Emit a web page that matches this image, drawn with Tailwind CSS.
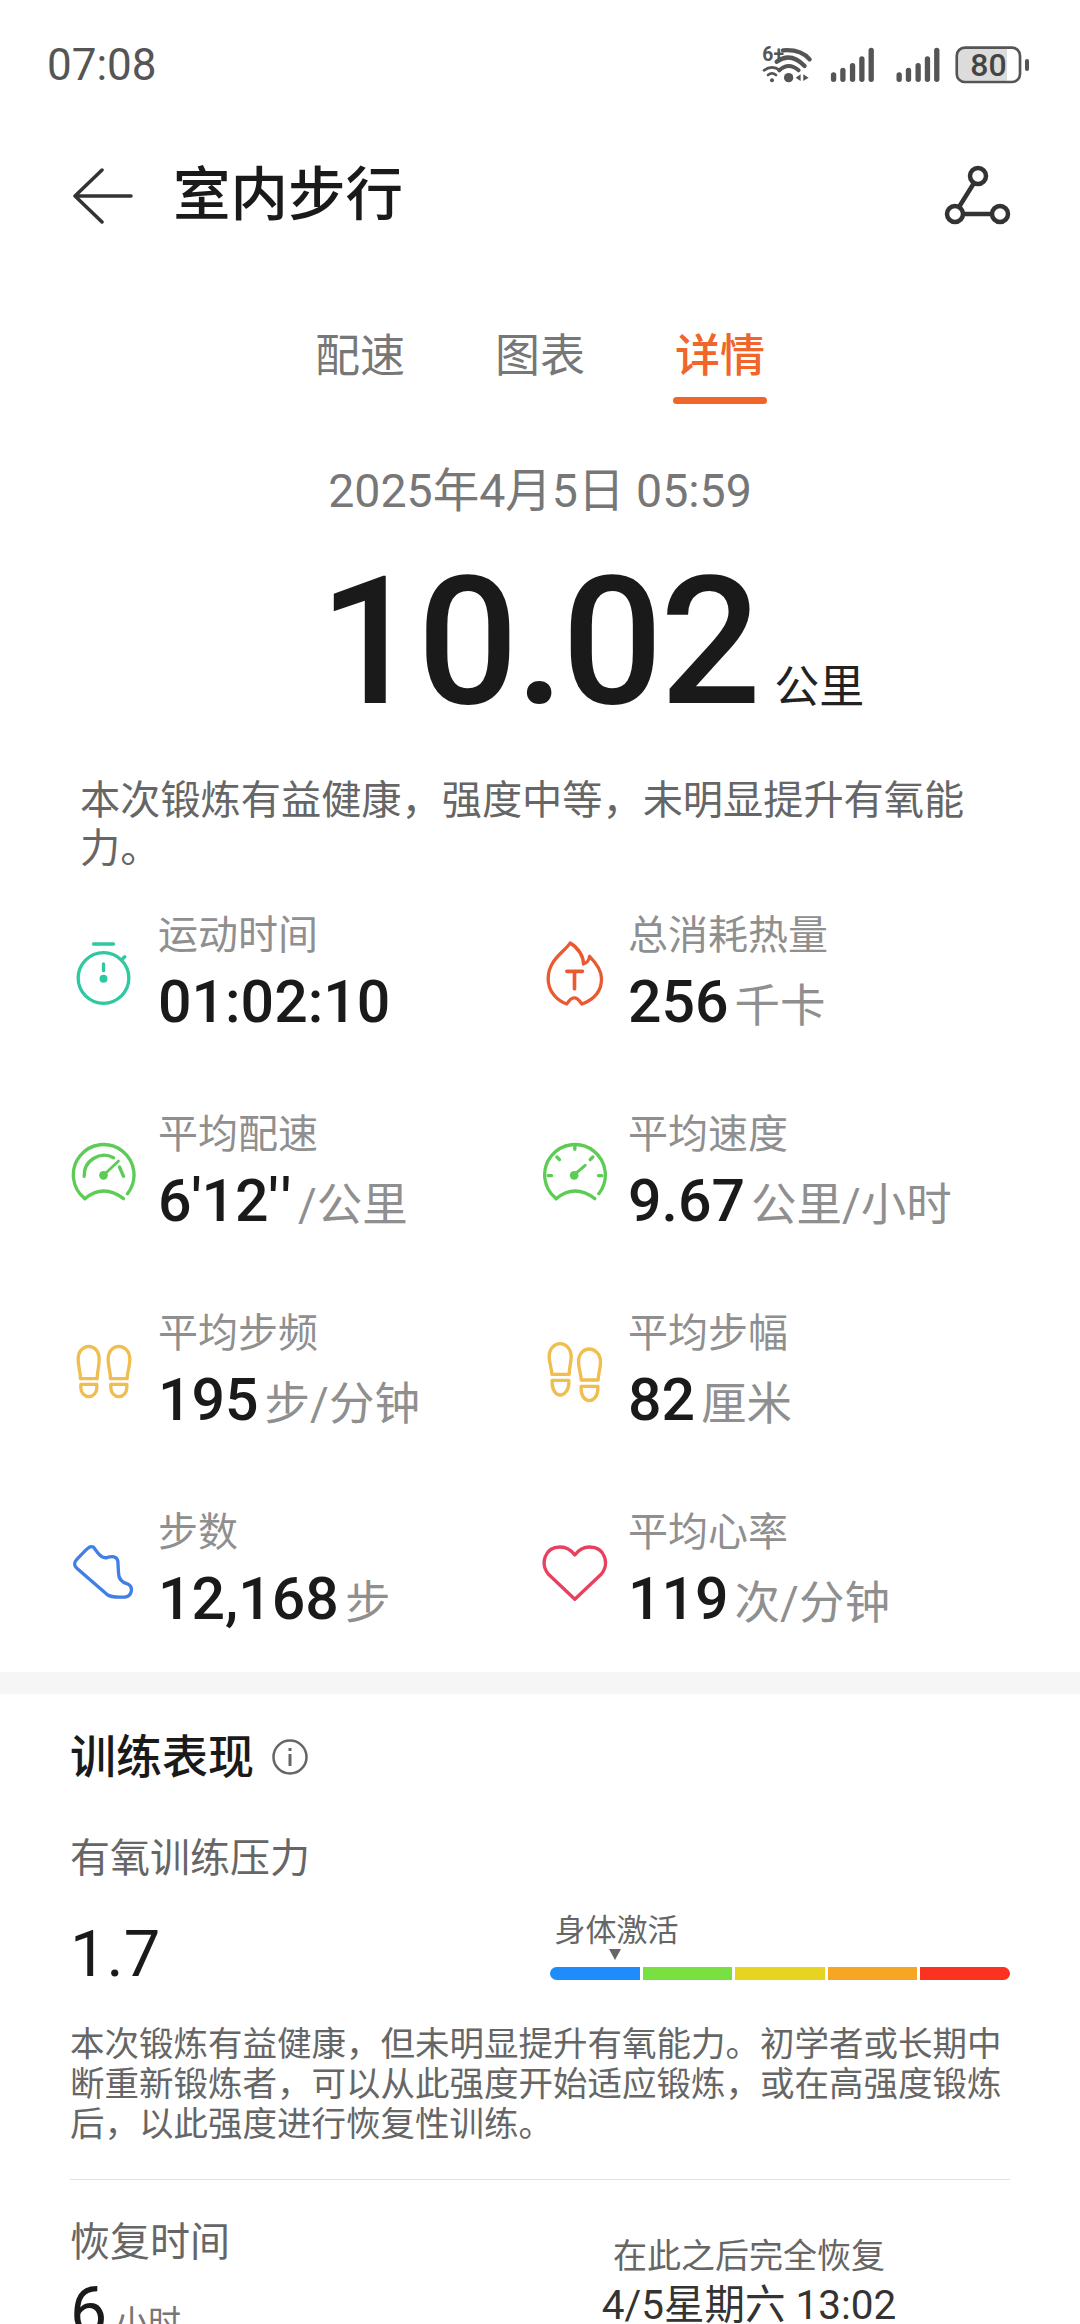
<!DOCTYPE html>
<html lang="zh-CN">
<head>
  <meta charset="UTF-8" />
  <meta name="viewport" content="width=device-width, initial-scale=1.0"/>
  <title>室内步行</title>
  <script src="https://cdn.jsdelivr.net/npm/@tailwindcss/browser@4"></script>
</head>

<body class="bg-white text-[#1a1a1a] font-['Roboto','Noto_Sans_CJK_SC',sans-serif]">
<div class="w-[1080px] h-[2324px] overflow-hidden">

  <!-- Status bar -->
  <div class="h-[130px] mb-[3px] pl-[47px] pr-[50px] flex items-center justify-between">
    <span class="text-[44px] leading-[50px] text-[#555]">07:08</span>
    <svg class="w-[273px] h-[70px] shrink-0 mr-[-1px] mb-[18px]" viewBox="170 0 820 210" fill="none">
      <!-- wifi -->
      <text x="183" y="120" font-size="58" font-weight="700" fill="#555" font-family="Roboto">6+</text>
      <g stroke="#555" stroke-linecap="round">
        <path d="M245 88Q298 84 325 115" stroke-width="13"/>
        <path d="M226 122Q268 92 310 135" stroke-width="13"/>
        <path d="M234 148Q262 122 292 148" stroke-width="12"/>
        <path d="M188 148Q212 130 236 148" stroke-width="8"/>
        <path d="M200 162Q212 152 224 162" stroke-width="8"/>
      </g>
      <circle cx="212" cy="178" r="6" fill="#555"/>
      <circle cx="262" cy="170" r="14" fill="#555"/>
      <path d="M283 170L298 160V180ZM306 160L322 170L306 180Z" fill="#555"/>
      <!-- signal -->
      <g stroke="#555" stroke-width="16" stroke-linecap="round">
        <path d="M397 175V162M425 175V148M454 175V134M482 175V114M510 175V88"/>
        <path d="M594 175V162M622 175V148M651 175V134M679 175V114M707 175V88"/>
      </g>
      <!-- battery -->
      <path d="M785 84H918V179H785Q771 179 771 165V98Q771 84 785 84Z" fill="#dcdcdc"/>
      <rect x="767" y="80" width="190" height="103" rx="24" stroke="#555" stroke-width="8"/>
      <text x="862" y="165" text-anchor="middle" font-size="96" font-weight="500" fill="#444" font-family="Roboto">80</text>
      <rect x="972" y="114" width="12" height="36" rx="6" fill="#555"/>
    </svg>
  </div>

  <!-- Header -->
  <div class="h-[126px] flex items-center justify-between pl-[72px] pr-[68px]">
    <div class="flex items-center">
      <svg class="w-[62px] h-[56px]" viewBox="0 0 62 56" fill="none" stroke="#333" stroke-width="3.5" stroke-linecap="round" stroke-linejoin="round">
        <path d="M30 2L3 28L30 54M3 28H59"/>
      </svg>
      <h1 class="ml-[39px] text-[57.5px] leading-[70px] font-medium text-[#1a1a1a]">室内步行</h1>
    </div>
    <svg class="w-[70px] h-[64px]" viewBox="0 0 70 64" fill="none" stroke="#333" stroke-width="4.5">
      <circle cx="36" cy="12" r="8"/>
      <circle cx="13" cy="50" r="8"/>
      <circle cx="58" cy="50" r="8"/>
      <path d="M32 19L17 43M21 50H50"/>
    </svg>
  </div>

  <!-- Tabs -->
  <div class="mt-[68px] flex justify-center gap-[90px] text-[45px] leading-[60px] text-[#777]">
    <div>配速</div>
    <div>图表</div>
    <div class="relative text-[#f0652a] font-medium">详情
      <div class="absolute left-[-2px] right-[-2px] top-[70px] h-[7px] rounded-full bg-[#f0652a]"></div>
    </div>
  </div>

  <!-- Summary -->
  <div class="mt-[74px] text-center text-[46.5px] leading-[60px] text-[#777]">2025年4月5日 05:59</div>
  <div class="mt-[31px] pl-[319px] h-[180px] flex items-baseline gap-[16px]">
    <span class="text-[178px] leading-[180px] font-medium tracking-[-3px] text-[#1a1a1a]">10.02</span>
    <span class="text-[45px] text-[#222]">公里</span>
  </div>
  <p class="mt-[45px] ml-[80px] w-[890px] text-[40.2px] leading-[48px] text-[#666]">本次锻炼有益健康，强度中等，未明显提升有氧能力。</p>

  <!-- Stats grid -->
  <div class="mt-[33px] pl-[70px] grid grid-cols-[470px_1fr] grid-rows-[199px_199px_199px_169px]">
    <div class="flex">
      <div class="w-[88px] pt-[32px]">
        <svg class="w-[67px] h-[70px]" viewBox="60 110 200 210" fill="none" stroke="#2fc8a0" stroke-width="10" stroke-linecap="round">
          <path d="M130 128H190"/>
          <circle cx="160" cy="230" r="76"/>
          <path d="M214 176L224 166"/>
          <path d="M160 188V208"/>
          <circle cx="160" cy="232" r="12" fill="#2fc8a0" stroke="none"/>
        </svg>
      </div>
      <div>
        <div class="text-[40px] leading-[60px] text-[#8f8f8f]">运动时间</div>
        <div class="text-[59px] leading-[72px] font-medium">01:02:10</div>
      </div>
    </div>
    <div class="flex">
      <div class="w-[88px] pt-[32px]">
        <svg class="w-[67px] h-[70px] ml-[2px]" viewBox="66 110 200 210" fill="none" stroke="#ea5a32" stroke-width="10" stroke-linecap="round" stroke-linejoin="round">
          <path d="M150 125C135 150 84 175 84 232C84 270 110 298 140 308C148 295 158 288 165 290C172 290 178 298 185 308C220 295 244 270 244 232C244 205 228 185 208 165C208 175 200 185 190 188C190 165 175 140 150 125Z"/>
          <path d="M140 210H187M163 210V262" stroke-width="11"/>
        </svg>
      </div>
      <div>
        <div class="text-[40px] leading-[60px] text-[#8f8f8f]">总消耗热量</div>
        <div class="text-[59px] leading-[72px] font-medium">256<span class="ml-[6px] text-[45.5px] font-normal text-[#8f8f8f]">千卡</span></div>
      </div>
    </div>

    <div class="flex">
      <div class="w-[88px] pt-[32px]">
        <svg class="w-[67px] h-[70px]" viewBox="60 708 200 210" fill="none" stroke="#5ccc55" stroke-width="10" stroke-linecap="round">
          <path d="M104 893A91 91 0 1 1 232 878"/>
          <path d="M104 893Q160 847 220 893"/>
          <path d="M102 826A60 60 0 0 1 190 770"/>
          <path d="M208 798L220 826"/>
          <path d="M160 823L205 780" stroke-width="8"/>
          <circle cx="160" cy="823" r="13" fill="#5ccc55" stroke="none"/>
        </svg>
      </div>
      <div>
        <div class="text-[40px] leading-[60px] text-[#8f8f8f]">平均配速</div>
        <div class="text-[59px] leading-[72px] font-medium">6'12<span class="tracking-[5px]">''</span><span class="ml-[2px] text-[45.5px] font-normal text-[#8f8f8f]">/公里</span></div>
      </div>
    </div>
    <div class="flex">
      <div class="w-[88px] pt-[32px]">
        <svg class="w-[67px] h-[70px] ml-[2px]" viewBox="66 708 200 210" fill="none" stroke="#5ccc55" stroke-width="10" stroke-linecap="round">
          <path d="M108 893A91 91 0 1 1 236 878"/>
          <path d="M108 893Q164 847 224 893"/>
          <path d="M84 824H94M110 768L118 776M164 735V745M218 768L210 776M245 824H235"/>
          <path d="M160 823L195 793" stroke-width="9"/>
          <circle cx="162" cy="823" r="13" fill="#5ccc55" stroke="none"/>
        </svg>
      </div>
      <div>
        <div class="text-[40px] leading-[60px] text-[#8f8f8f]">平均速度</div>
        <div class="text-[59px] leading-[72px] font-medium">9.67<span class="ml-[6px] text-[45.5px] font-normal text-[#8f8f8f]">公里/小时</span></div>
      </div>
    </div>

    <div class="flex">
      <div class="w-[88px] pt-[32px]">
        <svg class="w-[67px] h-[70px]" viewBox="60 135 200 210" fill="none" stroke="#f0bd4f" stroke-width="10" stroke-linejoin="round">
          <path d="M84 205C84 180 100 166 116 166C132 166 147 180 147 205C147 225 141 245 141 263H91C91 245 84 225 84 205Z"/>
          <path d="M92 280H140V290C140 305 128 317 116 317C104 317 92 305 92 290Z"/>
          <path d="M174 205C174 180 190 166 206 166C222 166 239 180 239 205C239 225 231 245 231 263H181C181 245 174 225 174 205Z"/>
          <path d="M182 280H230V290C230 305 218 317 206 317C194 317 182 305 182 290Z"/>
        </svg>
      </div>
      <div>
        <div class="text-[40px] leading-[60px] text-[#8f8f8f]">平均步频</div>
        <div class="text-[59px] leading-[72px] font-medium">195<span class="ml-[6px] text-[45.5px] font-normal text-[#8f8f8f]">步/分钟</span></div>
      </div>
    </div>
    <div class="flex">
      <div class="w-[88px] pt-[32px]">
        <svg class="w-[67px] h-[70px] ml-[2px]" viewBox="66 135 200 210" fill="none" stroke="#f0bd4f" stroke-width="10" stroke-linejoin="round">
          <path d="M87 197C87 172 103 158 120 158C136 158 153 172 153 197C153 215 147 232 147 250H95C95 232 87 215 87 197Z"/>
          <path d="M96 268H146V276C146 298 132 312 120 312C108 312 96 298 96 276Z"/>
          <path d="M175 213C175 188 191 174 207 174C223 174 241 188 241 213C241 231 234 250 234 267H183C183 250 175 231 175 213Z"/>
          <path d="M183 286H233V294C233 316 219 329 207 329C195 329 183 316 183 294Z"/>
        </svg>
      </div>
      <div>
        <div class="text-[40px] leading-[60px] text-[#8f8f8f]">平均步幅</div>
        <div class="text-[59px] leading-[72px] font-medium">82<span class="ml-[6px] text-[45.5px] font-normal text-[#8f8f8f]">厘米</span></div>
      </div>
    </div>

    <div class="flex">
      <div class="w-[88px] pt-[32px]">
        <svg class="w-[67px] h-[70px]" viewBox="60 732 200 210" fill="none" stroke="#3f7fe6" stroke-width="10" stroke-linejoin="round">
          <path d="M125 767C115 765 100 785 80 805C70 815 72 825 80 832L170 910C180 918 195 920 225 918C245 915 250 890 235 880C215 875 205 865 205 845L203 810C200 795 185 795 170 800C155 803 145 790 135 775C132 770 128 767 125 767Z"/>
        </svg>
      </div>
      <div>
        <div class="text-[40px] leading-[60px] text-[#8f8f8f]">步数</div>
        <div class="text-[59px] leading-[72px] font-medium">12,168<span class="ml-[6px] text-[45.5px] font-normal text-[#8f8f8f]">步</span></div>
      </div>
    </div>
    <div class="flex">
      <div class="w-[88px] pt-[32px]">
        <svg class="w-[67px] h-[70px] ml-[2px]" viewBox="66 732 200 210" fill="none" stroke="#e8405f" stroke-width="10" stroke-linejoin="round">
          <path d="M164 925L85 850C60 820 72 768 120 768C140 768 155 780 164 792C173 780 188 768 208 768C256 768 268 820 243 850Z"/>
        </svg>
      </div>
      <div>
        <div class="text-[40px] leading-[60px] text-[#8f8f8f]">平均心率</div>
        <div class="text-[59px] leading-[72px] font-medium">119<span class="ml-[6px] text-[45.5px] font-normal text-[#8f8f8f]">次/分钟</span></div>
      </div>
    </div>
  </div>

  <div class="h-[22px] bg-[#f6f6f6]"></div>

  <!-- Training performance -->
  <section class="px-[70px] pt-[33px]">
    <div class="flex items-center gap-[17px]">
      <h2 class="text-[46px] leading-[60px] font-medium">训练表现</h2>
      <svg class="w-[38px] h-[38px]" viewBox="0 0 38 38" fill="none" stroke="#666" stroke-width="2.5">
        <circle cx="19" cy="19" r="16.5"/>
        <path d="M19 16V28M19 10V13" stroke-width="3"/>
      </svg>
    </div>
    <div class="mt-[42px] text-[40px] leading-[60px] text-[#666]">有氧训练压力</div>
    <div class="flex">
      <div class="w-[481px] pt-[30px] text-[65px] leading-[70px]">1.7</div>
      <div class="w-[460px] pt-[22px]">
        <div class="pl-[4px] text-[31px] leading-[40px] text-[#666]">身体激活</div>
        <div class="ml-[59px] mt-[-2px] w-0 h-0 border-x-[6px] border-x-transparent border-t-[11px] border-t-[#666]"></div>
        <div class="mt-[7px] h-[13px] flex gap-[3px]">
          <div class="flex-1 rounded-l-full bg-[#1e8cfa]"></div>
          <div class="flex-1 bg-[#78e040]"></div>
          <div class="flex-1 bg-[#e6d420]"></div>
          <div class="flex-1 bg-[#f5a623]"></div>
          <div class="flex-1 rounded-r-full bg-[#fa3220]"></div>
        </div>
      </div>
    </div>
    <p class="mt-[35px] text-[34.5px] leading-[40px] text-[#666]">本次锻炼有益健康，但未明显提升有氧能力。初学者或长期中断重新锻炼者，可以从此强度开始适应锻炼，或在高强度锻炼后，以此强度进行恢复性训练。</p>
    <div class="mt-[35px] h-px bg-[#e0e0e0]"></div>
    <div class="mt-[33px] flex">
      <div class="w-[524px]">
        <div class="text-[40px] leading-[60px] text-[#666]">恢复时间</div>
        <div class="mt-[3px] text-[66px] leading-[72px]">6<span class="ml-[8px] text-[33px] text-[#777]">小时</span></div>
      </div>
      <div class="w-[310px] text-center pt-[19px]">
        <div class="text-[34px] leading-[48px] text-[#666]">在此之后完全恢复</div>
        <div class="text-[40.5px] leading-[50px] text-[#333]">4/5星期六 13:02</div>
      </div>
    </div>
  </section>

</div>
</body>
</html>
